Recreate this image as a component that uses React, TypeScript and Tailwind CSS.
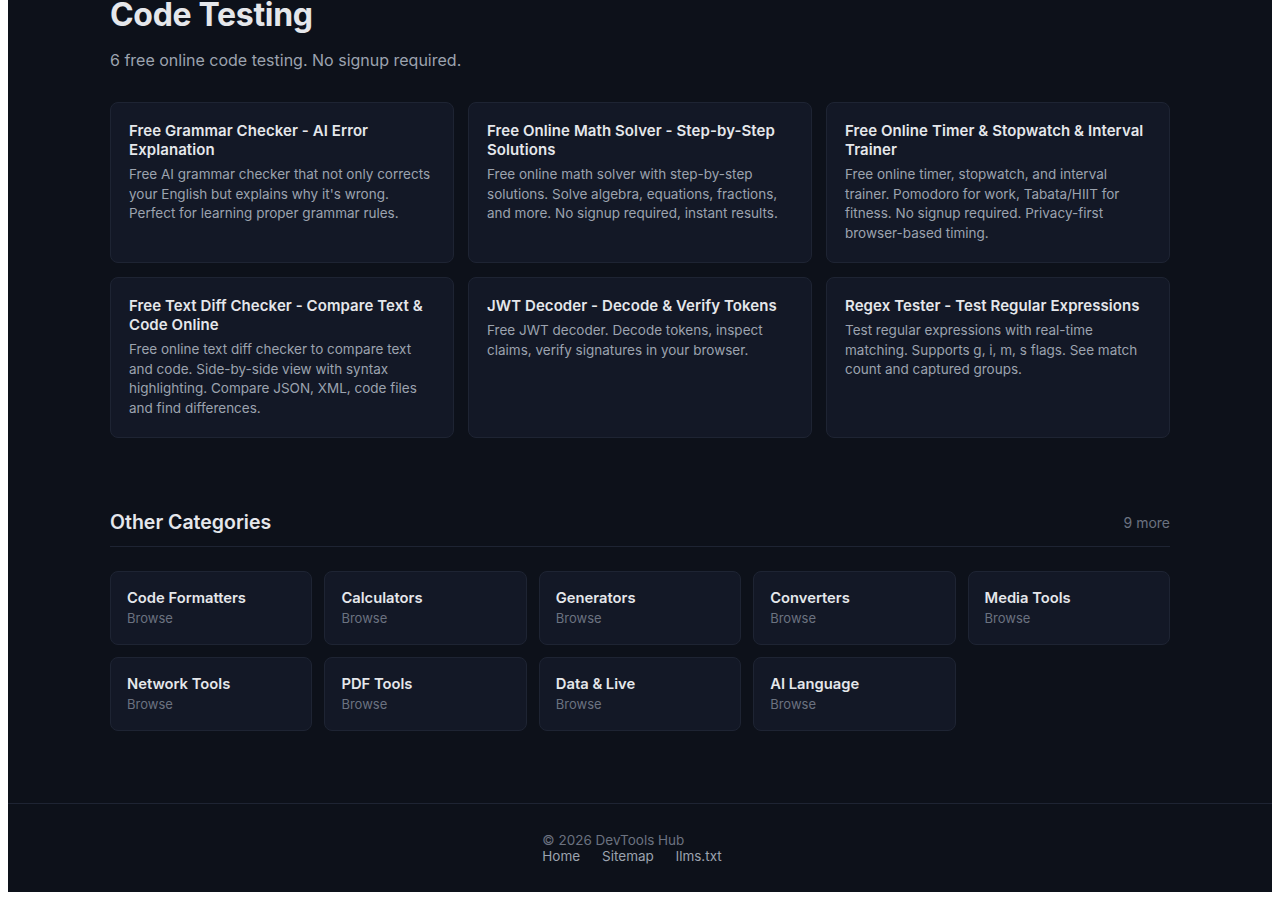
const tools = [
  {
    title: "Free Grammar Checker - AI Error Explanation",
    desc: "Free AI grammar checker that not only corrects your English but explains why it's wrong. Perfect for learning proper grammar rules.",
  },
  {
    title: "Free Online Math Solver - Step-by-Step Solutions",
    desc: "Free online math solver with step-by-step solutions. Solve algebra, equations, fractions, and more. No signup required, instant results.",
  },
  {
    title: "Free Online Timer & Stopwatch & Interval Trainer",
    desc: "Free online timer, stopwatch, and interval trainer. Pomodoro for work, Tabata/HIIT for fitness. No signup required. Privacy-first browser-based timing.",
  },
  {
    title: "Free Text Diff Checker - Compare Text & Code Online",
    desc: "Free online text diff checker to compare text and code. Side-by-side view with syntax highlighting. Compare JSON, XML, code files and find differences.",
  },
  {
    title: "JWT Decoder - Decode & Verify Tokens",
    desc: "Free JWT decoder. Decode tokens, inspect claims, verify signatures in your browser.",
  },
  {
    title: "Regex Tester - Test Regular Expressions",
    desc: "Test regular expressions with real-time matching. Supports g, i, m, s flags. See match count and captured groups.",
  },
];

const categories = [
  "Code Formatters",
  "Calculators",
  "Generators",
  "Converters",
  "Media Tools",
  "Network Tools",
  "PDF Tools",
  "Data & Live",
  "AI Language",
];

export default function App() {
  return (
    <div className="bg-white px-2 pb-2 font-['Inter',sans-serif]">
      <div className="bg-[#0d111a] overflow-hidden">
        <main className="w-[1060px] mx-auto">
          <h1 className="mt-[-5px] text-[32px] leading-[40px] font-bold text-[#e5e7eb] tracking-[-0.01em]">
            Code Testing
          </h1>
          <p className="mt-3 text-[16px] leading-[26px] text-[#9ca3af]">
            6 free online code testing. No signup required.
          </p>

          <div className="mt-[29px] grid grid-cols-3 gap-[14px]">
            {tools.map((t) => (
              <a
                key={t.title}
                href="#"
                className="block rounded-lg border border-[#1e2433] bg-[#131826] px-[18px] pt-[18px] pb-[19px]"
              >
                <h2 className="text-[15px] leading-[19px] font-semibold text-[#e5e7eb] tracking-[0.005em]">
                  {t.title}
                </h2>
                <p className="mt-[6px] text-[13.5px] leading-[19.5px] text-[#9ca3af]">
                  {t.desc}
                </p>
              </a>
            ))}
          </div>

          <section className="mt-[70px]">
            <div className="flex items-center justify-between border-b border-[#1e2433] pb-[10px]">
              <h2 className="text-[19.5px] leading-[28px] font-semibold text-[#e5e7eb]">
                Other Categories
              </h2>
              <span className="text-[14px] text-[#6b7280]">9 more</span>
            </div>
            <div className="mt-6 grid grid-cols-5 gap-3">
              {categories.map((c) => (
                <a
                  key={c}
                  href="#"
                  className="block rounded-lg border border-[#1e2433] bg-[#131826] p-4"
                >
                  <div className="text-[14.75px] leading-[20px] font-semibold text-[#e5e7eb]">
                    {c}
                  </div>
                  <div className="text-[13px] leading-[20px] text-[#6b7280]">
                    Browse
                  </div>
                </a>
              ))}
            </div>
          </section>
        </main>

        <footer className="mt-[72px] border-t border-[#1e2433] py-7">
          <div className="flex justify-center">
            <div className="mr-[16px] text-[13.5px] leading-4">
              <p className="text-[#6b7280]">© 2026 DevTools Hub</p>
              <div className="flex gap-[22px] text-[#9ca3af]">
                <a href="#">Home</a>
                <a href="#">Sitemap</a>
                <a href="#">llms.txt</a>
              </div>
            </div>
          </div>
        </footer>
      </div>
    </div>
  );
}
